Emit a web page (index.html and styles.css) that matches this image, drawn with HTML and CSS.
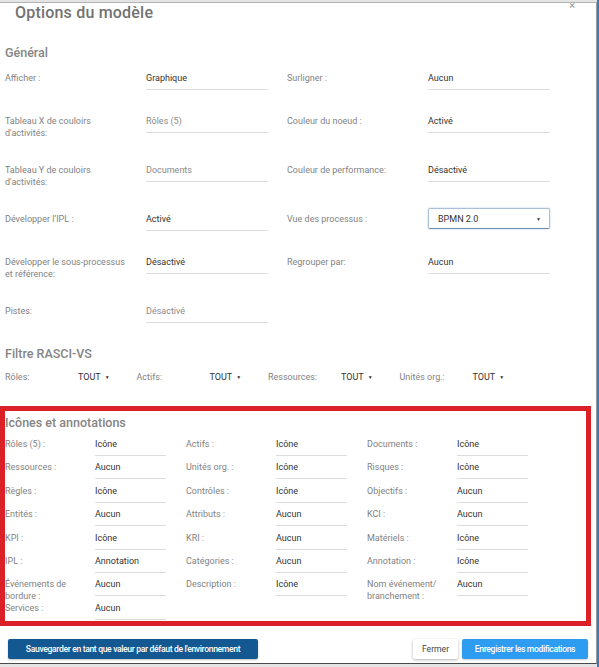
FILE: index.html
```html
<!DOCTYPE html>
<html lang="fr">
<head>
<meta charset="utf-8">
<title>Options du modèle</title>
<link rel="stylesheet" href="styles.css">
</head>
<body>
<div class="modal">
  <span class="close">×</span>
  <h1 class="title">Options du modèle</h1>

  <section class="section general">
    <h2 class="heading">Général</h2>
    <div class="general-grid">
      <div class="field"><span class="label">Afficher :</span><span class="value">Graphique</span></div>
      <div class="field"><span class="label">Surligner :</span><span class="value">Aucun</span></div>
      <div class="field"><span class="label">Tableau X de couloirs<br>d'activités:</span><span class="value muted">Rôles (5)</span></div>
      <div class="field"><span class="label">Couleur du noeud :</span><span class="value">Activé</span></div>
      <div class="field"><span class="label">Tableau Y de couloirs<br>d'activités:</span><span class="value muted">Documents</span></div>
      <div class="field"><span class="label">Couleur de performance:</span><span class="value">Désactivé</span></div>
      <div class="field"><span class="label">Développer l’IPL :</span><span class="value">Activé</span></div>
      <div class="field"><span class="label">Vue des processus :</span><span class="select"><span class="select-text">BPMN 2.0</span><span class="caret">▼</span></span></div>
      <div class="field"><span class="label">Développer le sous-processus<br>et référence:</span><span class="value">Désactivé</span></div>
      <div class="field"><span class="label">Regrouper par:</span><span class="value">Aucun</span></div>
      <div class="field"><span class="label">Pistes:</span><span class="value muted">Désactivé</span></div>
    </div>
  </section>

  <section class="section filter">
    <h2 class="heading">Filtre RASCI-VS</h2>
    <div class="filter-row">
      <span class="label">Rôles:</span><span class="dd">TOUT<span class="dd-caret">▼</span></span>
      <span class="label">Actifs:</span><span class="dd">TOUT<span class="dd-caret">▼</span></span>
      <span class="label">Ressources:</span><span class="dd">TOUT<span class="dd-caret">▼</span></span>
      <span class="label">Unités org.:</span><span class="dd">TOUT<span class="dd-caret">▼</span></span>
    </div>
  </section>

  <section class="icons">
    <h2 class="heading">Icônes et annotations</h2>
    <div class="icons-grid">
      <div class="ifield"><span class="label">Rôles (5) :</span><span class="value">Icône</span></div>
      <div class="ifield"><span class="label">Actifs :</span><span class="value">Icône</span></div>
      <div class="ifield"><span class="label">Documents :</span><span class="value">Icône</span></div>
      <div class="ifield"><span class="label">Ressources :</span><span class="value">Aucun</span></div>
      <div class="ifield"><span class="label">Unités org. :</span><span class="value">Icône</span></div>
      <div class="ifield"><span class="label">Risques :</span><span class="value">Icône</span></div>
      <div class="ifield"><span class="label">Règles :</span><span class="value">Icône</span></div>
      <div class="ifield"><span class="label">Contrôles :</span><span class="value">Icône</span></div>
      <div class="ifield"><span class="label">Objectifs :</span><span class="value">Aucun</span></div>
      <div class="ifield"><span class="label">Entités :</span><span class="value">Aucun</span></div>
      <div class="ifield"><span class="label">Attributs :</span><span class="value">Aucun</span></div>
      <div class="ifield"><span class="label">KCI :</span><span class="value">Aucun</span></div>
      <div class="ifield"><span class="label">KPI :</span><span class="value">Icône</span></div>
      <div class="ifield"><span class="label">KRI :</span><span class="value">Aucun</span></div>
      <div class="ifield"><span class="label">Matériels :</span><span class="value">Icône</span></div>
      <div class="ifield"><span class="label">IPL :</span><span class="value">Annotation</span></div>
      <div class="ifield"><span class="label">Catégories :</span><span class="value">Aucun</span></div>
      <div class="ifield"><span class="label">Annotation :</span><span class="value">Icône</span></div>
      <div class="ifield"><span class="label">Événements de<br>bordure :</span><span class="value">Aucun</span></div>
      <div class="ifield"><span class="label">Description :</span><span class="value">Icône</span></div>
      <div class="ifield"><span class="label">Nom événement/<br>branchement :</span><span class="value">Aucun</span></div>
      <div class="ifield"><span class="label">Services :</span><span class="value">Aucun</span></div>
    </div>
  </section>

  <footer class="footer">
    <button class="btn btn-dark">Sauvegarder en tant que valeur par défaut de l'environnement</button>
    <div class="footer-right">
      <button class="btn btn-light">Fermer</button>
      <button class="btn btn-primary">Enregistrer les modifications</button>
    </div>
  </footer>
</div>
</body>
</html>
```

FILE: styles.css
```css
html {
  background: linear-gradient(to right, #e4e4e4 597px, #2f7fc4 597px);
  min-height: 100%;
}
body {
  margin: 0;
  font-family: Roboto, "Liberation Sans", Arial, sans-serif;
  font-size: 9px;
  color: #333;
}
.modal {
  position: relative;
  box-sizing: border-box;
  width: 597px;
  height: 662px;
  margin-top: 2px;
  background: #fff;
  border-top: 1px solid #b4b4b4;
  border-right: 1px solid #9a9a9a;
  border-bottom: 1px solid #4a4a4a;
  display: flex;
  flex-direction: column;
}
.close {
  position: absolute;
  top: -3px;
  right: 21px;
  font-size: 11px;
  line-height: 12px;
  color: #9a9a9a;
}
.title {
  margin: 0;
  padding-left: 15px;
  font-size: 16px;
  font-weight: 500;
  line-height: 20px;
  color: #727272;
  letter-spacing: 0.2px;
}
.section {
  padding-left: 5px;
}
.heading {
  margin: 0;
  font-size: 12.5px;
  font-weight: 500;
  line-height: 16px;
  color: #858585;
}
.general .heading {
  margin-top: 22px;
}
.general-grid {
  margin-top: 11px;
  display: grid;
  grid-template-columns: 263px 263px;
  column-gap: 19px;
  row-gap: 25px;
  align-items: start;
}
.field {
  display: flex;
  align-items: flex-start;
}
.label {
  color: #828282;
  line-height: 12px;
  white-space: nowrap;
}
.field .label {
  width: 141px;
  flex: none;
}
.field .value {
  width: 122px;
  box-sizing: border-box;
  height: 18px;
  line-height: 12px;
  border-bottom: 1px solid #dcdcdc;
  color: #333;
}
.value.muted {
  color: #8a8a8a;
}
.select {
  width: 122px;
  height: 21px;
  margin-top: -5px;
  box-sizing: border-box;
  display: flex;
  align-items: center;
  justify-content: space-between;
  padding: 0 8px 0 9px;
  border: 1px solid #a9c1d8;
  border-bottom-color: #6f8fae;
  border-radius: 2px;
  box-shadow: 0 0 2px rgba(70, 130, 190, 0.45);
  color: #333;
}
.caret {
  font-size: 5px;
  color: #333;
}
.filter .heading {
  margin-top: 23px;
}
.filter-row {
  margin-top: 9px;
  display: grid;
  grid-template-columns: 73px 58.5px 73px 58.5px 73px 58.5px 73px 58.5px;
  line-height: 12px;
}
.dd {
  color: #333;
}
.dd-caret {
  font-size: 5px;
  margin-left: 4px;
  vertical-align: 1px;
}
.icons {
  margin-top: 23px;
  width: 591px;
  box-sizing: border-box;
  border: 5px solid #dc2028;
  padding-top: 4px;
}
.icons-grid {
  margin-top: 7px;
  display: grid;
  grid-template-columns: 181px 181px 181px;
  grid-auto-rows: 19px;
  row-gap: 4.4px;
}
.ifield {
  display: flex;
  align-items: flex-start;
}
.ifield .label {
  width: 90px;
  flex: none;
}
.ifield .value {
  width: 71px;
  box-sizing: border-box;
  height: 18px;
  line-height: 12px;
  border-bottom: 1px solid #dcdcdc;
  color: #333;
}
.footer {
  margin-top: auto;
  padding: 0 8px 4px 8px;
  display: flex;
  justify-content: space-between;
  align-items: center;
}
.footer-right {
  display: flex;
  gap: 4px;
}
.btn {
  height: 20px;
  border: none;
  border-radius: 2px;
  font-family: Roboto, "Liberation Sans", Arial, sans-serif;
  font-size: 8.6px;
  padding: 0;
  cursor: pointer;
}
.btn-dark {
  width: 250px;
  background: #145891;
  color: #fff;
  font-weight: 500;
  letter-spacing: -0.35px;
  box-shadow: 0 1px 2px rgba(0, 0, 0, 0.25);
}
.btn-light {
  width: 45px;
  background: #fff;
  color: #444;
  box-shadow: 0 1px 3px rgba(0, 0, 0, 0.3);
}
.btn-primary {
  width: 126px;
  background: #2e9cf1;
  color: #fff;
  font-weight: 500;
  letter-spacing: -0.35px;
  box-shadow: 0 1px 2px rgba(0, 0, 0, 0.2);
}
```
